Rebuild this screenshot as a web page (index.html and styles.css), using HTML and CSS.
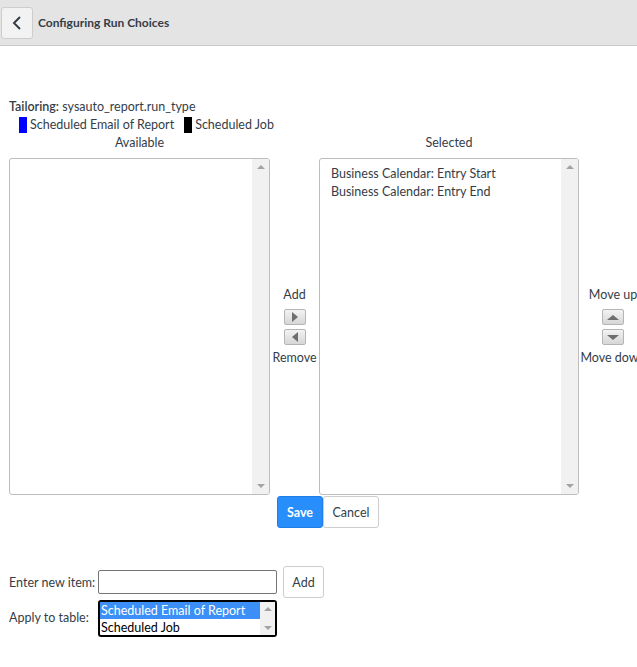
FILE: index.html
```html
<!DOCTYPE html>
<html lang="en">
<head>
    <meta charset="UTF-8">
    <title>Configuring Run Choices</title>
    <link rel="stylesheet" href="styles.css">
</head>
<body>
    <div class="header">
        <button class="back-btn" aria-label="Back">
            <svg width="12" height="16" viewBox="0 0 12 16"><path d="M9 2 L3 8 L9 14" fill="none" stroke="#343d47" stroke-width="2"/></svg>
        </button>
        <span class="title">Configuring Run Choices</span>
    </div>

    <div class="content">
        <div class="tailoring"><b>Tailoring:</b> sysauto_report.run_type</div>
        <div class="legend">
            <span class="swatch blue"></span> Scheduled Email of Report
            <span class="swatch black"></span> Scheduled Job
        </div>

        <div class="bucket">
            <div class="col-head">Available</div>
            <div></div>
            <div class="col-head">Selected</div>
            <div></div>

            <div class="listbox">
                <div class="items"></div>
                <div class="scroll"><span class="arr up"></span><span class="arr down"></span></div>
            </div>
            <div class="mover">
                <span>Add</span>
                <button class="mbtn first"><span class="tri right"></span></button>
                <button class="mbtn"><span class="tri left"></span></button>
                <span class="last">Remove</span>
            </div>
            <div class="listbox">
                <div class="items">
                    <div>Business Calendar: Entry Start</div>
                    <div>Business Calendar: Entry End</div>
                </div>
                <div class="scroll"><span class="arr up"></span><span class="arr down"></span></div>
            </div>
            <div class="mover order">
                <span>Move up</span>
                <button class="mbtn first"><span class="tri upt"></span></button>
                <button class="mbtn"><span class="tri downt"></span></button>
                <span class="last">Move down</span>
            </div>
        </div>

        <div class="actions">
            <button class="save">Save</button>
            <button class="cancel">Cancel</button>
        </div>

        <div class="new-item">
            <div class="row">
                <label for="item">Enter new item:</label>
                <input type="text" id="item">
                <button class="add-btn">Add</button>
            </div>
            <div class="row">
                <label>Apply to table:</label>
                <div class="tables">
                    <div class="opts">
                        <div class="opt sel">Scheduled Email of Report</div>
                        <div class="opt">Scheduled Job</div>
                    </div>
                    <div class="scroll small"><span class="arr up"></span><span class="arr down"></span></div>
                </div>
            </div>
        </div>
    </div>
</body>
</html>
```

FILE: styles.css
```css
body {
    margin: 0;
    font-family: Lato, "Open Sans", sans-serif;
    font-size: 12.5px;
    color: #343d47;
    background: white;
    overflow: hidden;
}
button {
    font-family: inherit;
}
.header {
    display: flex;
    align-items: center;
    height: 45px;
    background: #e4e4e4;
    border-bottom: 1px solid #c9c9c9;
}
.back-btn {
    width: 32px;
    height: 32px;
    margin-left: 1px;
    background: #f2f2f2;
    border: 1px solid #cdcdcd;
    border-radius: 3px;
    display: flex;
    align-items: center;
    justify-content: center;
    padding: 0;
}
.title {
    margin-left: 5px;
    font-size: 12px;
    font-weight: bold;
}
.content {
    padding-top: 52px;
}
.tailoring {
    padding-left: 9px;
    line-height: 17px;
}
.tailoring b {
    font-weight: 600;
}
.legend {
    padding-left: 19px;
    line-height: 18px;
    margin-top: 1px;
    display: flex;
    align-items: center;
    gap: 3px;
}
.swatch {
    display: inline-block;
    width: 8px;
    height: 16px;
}
.swatch.blue { background: #0000ff; }
.swatch.black { background: #000; margin-left: 7px; }
.bucket {
    display: grid;
    grid-template-columns: 261px 49px 260px 68px;
    margin-left: 9px;
}
.col-head {
    text-align: center;
    line-height: 18px;
    margin-bottom: 6px;
}
.listbox {
    box-sizing: border-box;
    height: 337px;
    border: 1px solid #bdbdbd;
    border-radius: 3px;
    display: flex;
    overflow: hidden;
}
.items {
    flex: 1;
    padding: 6px 11px;
    line-height: 18px;
}
.scroll {
    width: 17px;
    background: #f1f1f1;
    display: flex;
    flex-direction: column;
    justify-content: space-between;
    align-items: center;
    padding: 6px 0;
}
.arr {
    width: 0;
    height: 0;
    border-left: 4px solid transparent;
    border-right: 4px solid transparent;
}
.arr.up { border-bottom: 4px solid #a3a3a3; }
.arr.down { border-top: 4px solid #a3a3a3; }
.mover {
    display: flex;
    flex-direction: column;
    align-items: center;
    justify-content: center;
    white-space: nowrap;
}
.mover span {
    line-height: 16px;
}
.mbtn {
    width: 22px;
    height: 16px;
    padding: 0;
    border: 1px solid #b5b5b5;
    border-radius: 2px;
    background: linear-gradient(#f3f3f3, #d6d6d6);
    display: flex;
    align-items: center;
    justify-content: center;
    margin-top: 4px;
}
.mbtn.first { margin-top: 6px; }
.mover .last { margin-top: 5px; }
.tri {
    width: 0;
    height: 0;
}
.tri.right { border-top: 5px solid transparent; border-bottom: 5px solid transparent; border-left: 6px solid #6e6e6e; }
.tri.left { border-top: 5px solid transparent; border-bottom: 5px solid transparent; border-right: 6px solid #6e6e6e; }
.tri.upt { border-left: 6px solid transparent; border-right: 6px solid transparent; border-bottom: 5px solid #6e6e6e; }
.tri.downt { border-left: 6px solid transparent; border-right: 6px solid transparent; border-top: 5px solid #6e6e6e; }
.actions {
    display: flex;
    padding-left: 277px;
    margin-top: 1px;
}
.save {
    width: 46px;
    height: 32px;
    background: #278efc;
    color: white;
    font-weight: bold;
    font-size: 12.5px;
    border: 1px solid #1f7fe6;
    border-radius: 3px;
}
.cancel {
    width: 56px;
    height: 32px;
    background: white;
    color: #343d47;
    font-size: 12.5px;
    border: 1px solid #cdcdcd;
    border-radius: 3px;
}
.new-item {
    margin-top: 38px;
    padding-left: 9px;
}
.row {
    display: flex;
    align-items: center;
}
.row label {
    width: 89px;
    white-space: nowrap;
}
.row input {
    box-sizing: border-box;
    width: 179px;
    height: 24px;
    border: 1px solid #767676;
    border-radius: 2px;
    padding: 1px 3px;
    margin: 0;
}
.add-btn {
    margin-left: 6px;
    width: 41px;
    height: 32px;
    background: white;
    border: 1px solid #cdcdcd;
    border-radius: 3px;
    color: #343d47;
    font-size: 12.5px;
}
.tables {
    box-sizing: border-box;
    margin-top: 2px;
    width: 179px;
    height: 37px;
    border: 2px solid #000;
    border-radius: 3px;
    display: flex;
    color: #000;
}
.opts {
    flex: 1;
}
.opt {
    line-height: 17px;
    padding-left: 1px;
}
.opt.sel {
    background: #3c8ff7;
    color: white;
}
.scroll.small {
    width: 15px;
    padding: 5px 0;
}
```
